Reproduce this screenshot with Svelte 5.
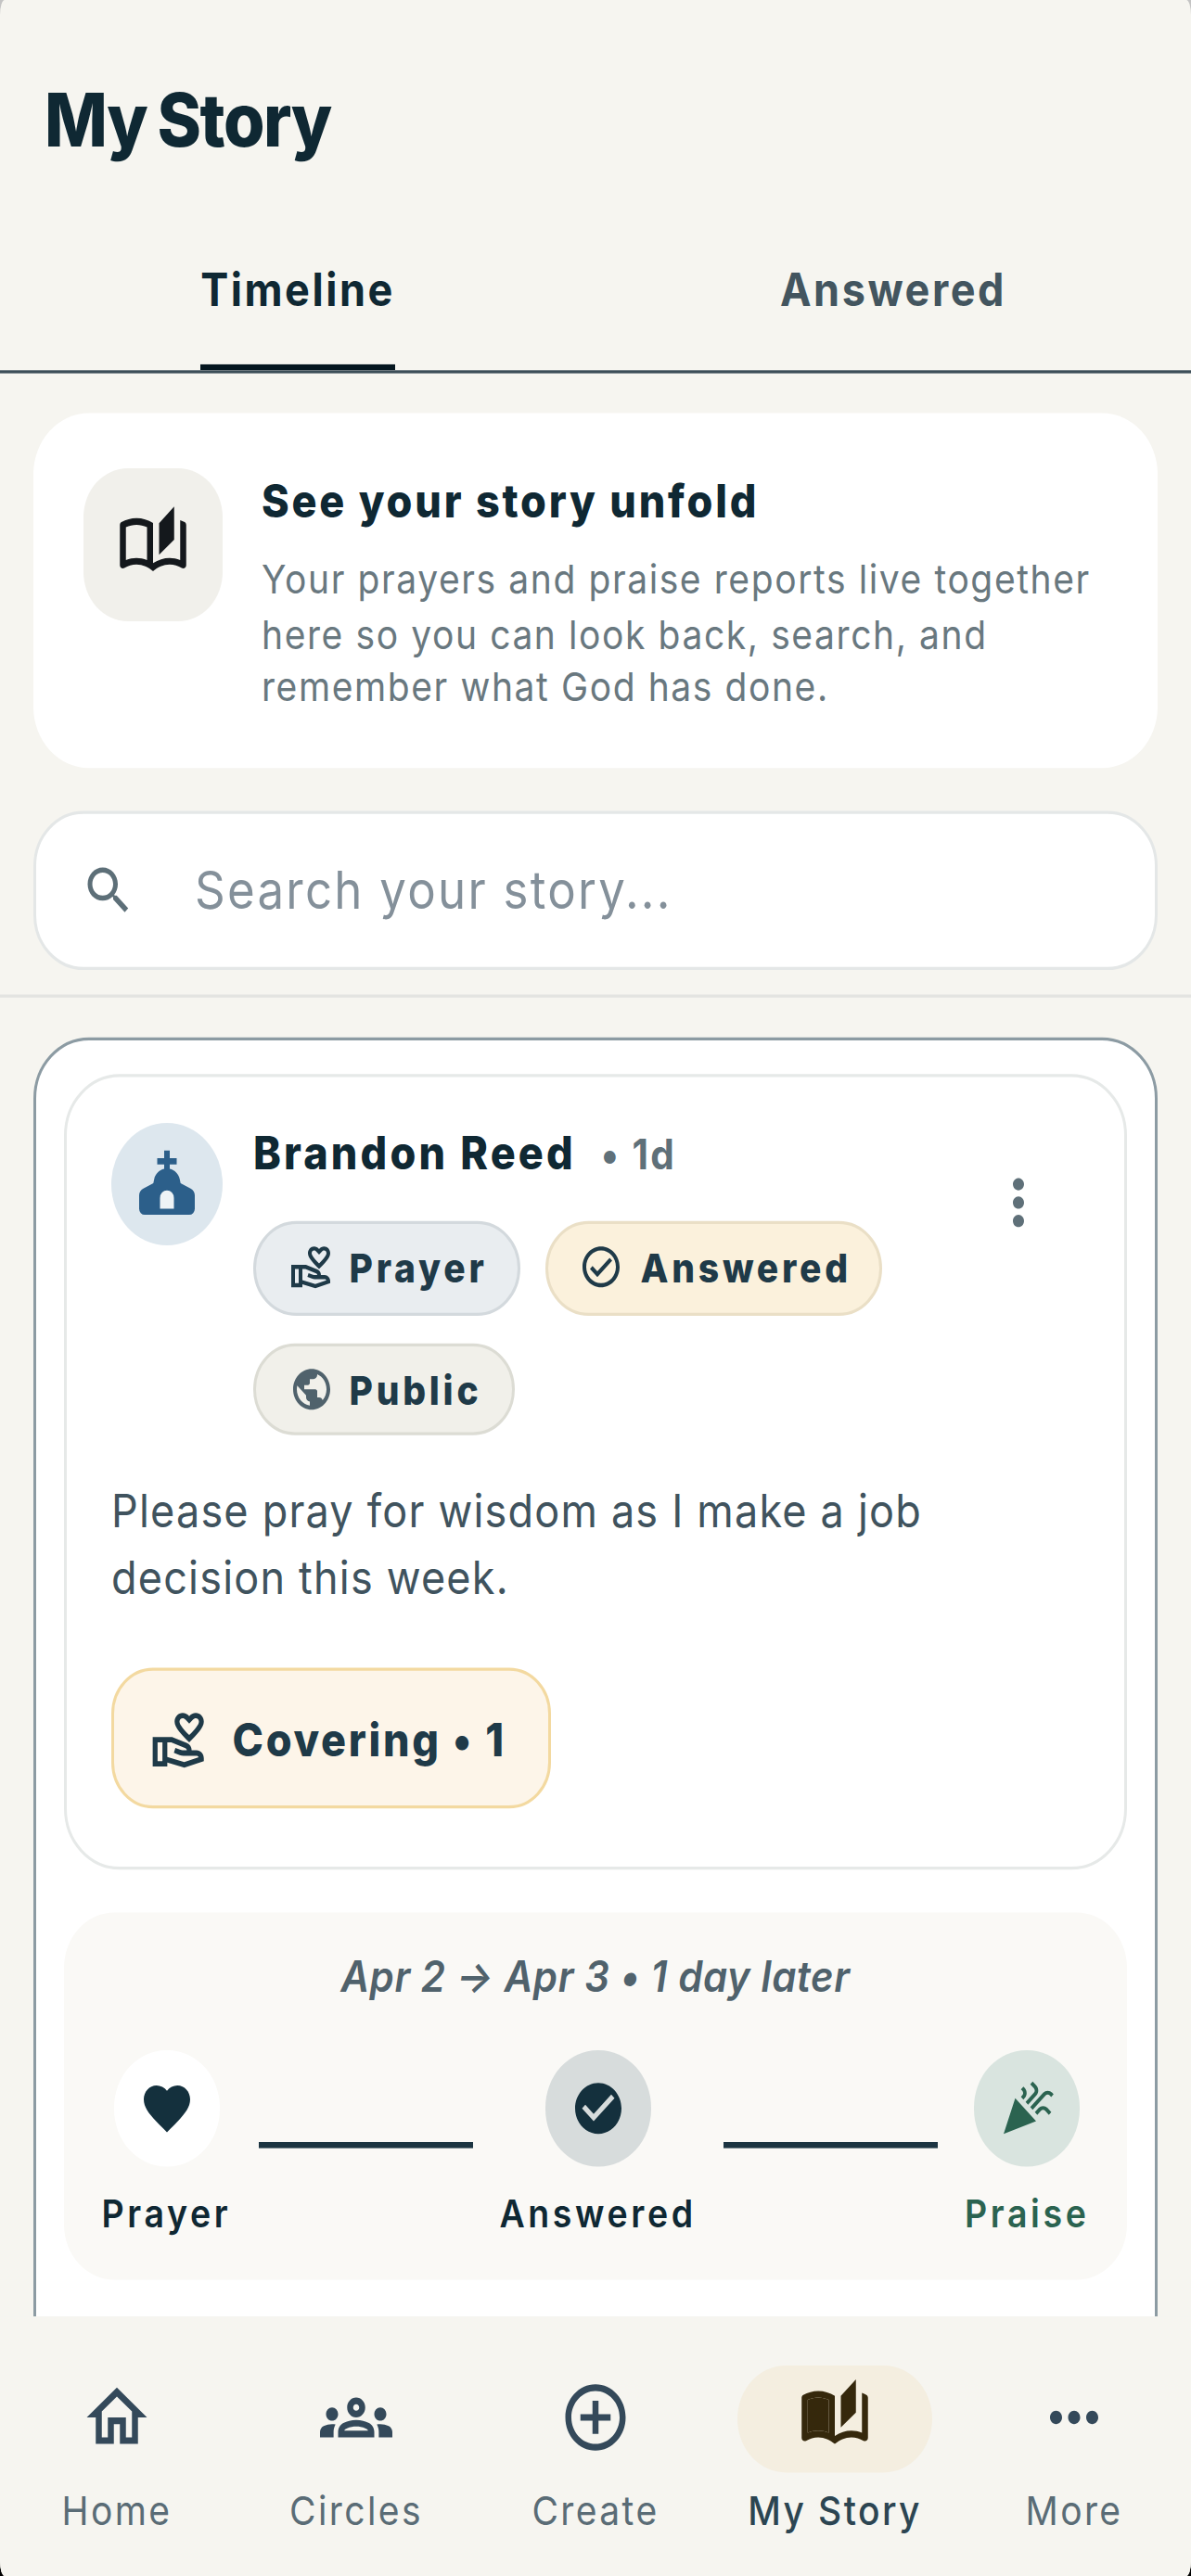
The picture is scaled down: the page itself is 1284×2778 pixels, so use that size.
<script>
  const navItems = [
    { label: 'Home', icon: 'M12 5.69l5 4.5V18h-2v-6H9v6H7v-7.81l5-4.5M12 3L2 12h3v8h6v-6h2v6h6v-8h3L12 3z' },
    { label: 'Circles', icon: 'M4 13c1.1 0 2-.9 2-2s-.9-2-2-2-2 .9-2 2 .9 2 2 2zm1.13 1.1c-.37-.06-.74-.1-1.13-.1-.99 0-1.93.21-2.78.58C.48 14.9 0 15.62 0 16.43V18h4.5v-1.61c0-.83.23-1.61.63-2.29zM20 13c1.1 0 2-.9 2-2s-.9-2-2-2-2 .9-2 2 .9 2 2 2zm4 3.43c0-.81-.48-1.53-1.22-1.85-.85-.37-1.79-.58-2.78-.58-.39 0-.76.04-1.13.1.4.68.63 1.46.63 2.29V18H24v-1.57zm-7.76-2.78c-1.17-.52-2.61-.9-4.24-.9-1.63 0-3.07.39-4.24.9C6.68 14.13 6 15.21 6 16.39V18h12v-1.61c0-1.18-.68-2.26-1.76-2.74zM8.07 16c.09-.23.13-.39.91-.69.97-.38 1.99-.56 3.02-.56s2.05.18 3.02.56c.77.3.81.46.91.69H8.07zM12 8c.55 0 1 .45 1 1s-.45 1-1 1-1-.45-1-1 .45-1 1-1m0-2c-1.66 0-3 1.34-3 3s1.34 3 3 3 3-1.34 3-3-1.34-3-3-3z' },
    { label: 'Create', icon: 'M13 7h-2v4H7v2h4v4h2v-4h4v-2h-4V7zm-1-5C6.48 2 2 6.48 2 12s4.48 10 10 10 10-4.48 10-10S17.52 2 12 2zm0 18c-4.41 0-8-3.59-8-8s3.59-8 8-8 8 3.59 8 8-3.59 8-8 8z' },
    { label: 'My Story', active: true },
    { label: 'More', icon: 'M6 10c-1.1 0-2 .9-2 2s.9 2 2 2 2-.9 2-2-.9-2-2-2zm12 0c-1.1 0-2 .9-2 2s.9 2 2 2 2-.9 2-2-.9-2-2-2zm-6 0c-1.1 0-2 .9-2 2s.9 2 2 2 2-.9 2-2-.9-2-2-2z' }
  ];

  const book = 'M22.47 5.2C22 4.96 21.51 4.76 21 4.59v12.03C19.86 16.21 18.69 16 17.5 16c-1.9 0-3.78.54-5.5 1.58V5.48C10.38 4.55 8.51 4 6.5 4 4.71 4 3.02 4.44 1.53 5.2 1.2 5.36 1 5.71 1 6.08v12.08c0 .58.47.99 1 .99.16 0 .32-.04.48-.12C3.69 18.4 5.05 18 6.5 18c2.07 0 3.98.82 5.5 2 1.52-1.18 3.43-2 5.5-2 1.45 0 2.81.4 4.02 1.04.16.08.32.12.48.12.52 0 1-.41 1-.99V6.08c0-.37-.2-.72-.53-.88zM10 16.62C8.86 16.21 7.69 16 6.5 16c-1.19 0-2.36.21-3.5.62V6.71C4.11 6.24 5.28 6 6.5 6c1.2 0 2.39.25 3.5.72v9.9zM19 .5l-5 5V15l5-4.5V.5z';
  const bookPage = 'M3 6.71C4.11 6.24 5.28 6 6.5 6c1.2 0 2.39.25 3.5.72v9.9C8.86 16.21 7.69 16 6.5 16c-1.19 0-2.36.21-3.5.62z';
  const hands = 'M16 13c3.09-2.81 6-5.44 6-7.7C22 3.45 20.55 2 18.7 2c-1.04 0-2.05.49-2.7 1.25C15.34 2.49 14.34 2 13.3 2 11.45 2 10 3.45 10 5.3c0 2.26 2.91 4.89 6 7.7zm-2.7-9c.44 0 .89.21 1.18.55L16 6l1.52-1.45c.29-.34.74-.55 1.18-.55.74 0 1.3.56 1.3 1.3 0 1.12-2.04 3.17-4 4.99-1.96-1.82-4-3.87-4-4.99 0-.74.56-1.3 1.3-1.3zM19 16h-2c0-1.2-.75-2.28-1.87-2.7L8.97 11H1v11h6v-1.44l7 1.94 8-2.5v-1c0-1.66-1.34-3-3-3zM3 20v-7h2v7H3zm10.97.41L7 18.48V13h1.61l5.82 2.17c.34.13.57.46.57.83 0 0-2-.05-2.3-.15l-2.38-.79-.63 1.9 2.38.79c.51.17 1.04.26 1.58.26H19c.39 0 .74.23.9.56l-5.93 1.84z';
  const circleCheck = 'M12 2C6.48 2 2 6.48 2 12s4.48 10 10 10 10-4.48 10-10S17.52 2 12 2zm0 18c-4.41 0-8-3.59-8-8s3.59-8 8-8 8 3.59 8 8-3.59 8-8 8zm4.59-12.42L10 14.17l-2.59-2.58L6 13l4 4 8-8z';
  const globe = 'M12 2C6.48 2 2 6.48 2 12s4.48 10 10 10 10-4.48 10-10S17.52 2 12 2zm-1 17.93c-3.95-.49-7-3.85-7-7.93 0-.62.08-1.21.21-1.79L9 15v1c0 1.1.9 2 2 2v1.93zm6.9-2.54c-.26-.81-1-1.39-1.9-1.39h-1v-3c0-.55-.45-1-1-1H8v-2h2c.55 0 1-.45 1-1V7h2c1.1 0 2-.9 2-2v-.41c2.93 1.19 5 4.06 5 7.41 0 2.08-.8 3.97-2.1 5.39z';
</script>

<div class="stage">
  <div class="screen">
    <header>
      <h1>My Story</h1>
      <div class="tabs">
        <div class="tab on"><span>Timeline</span></div>
        <div class="tab"><span>Answered</span></div>
      </div>
    </header>

    <section class="intro">
      <div class="intro-icon">
        <svg viewBox="0 0 24 24" width="26" height="26"><path d={book} /></svg>
      </div>
      <div>
        <h2>See your story unfold</h2>
        <p>Your prayers and praise reports live together here so you can look back, search, and remember what God has done.</p>
      </div>
    </section>

    <div class="search">
      <svg viewBox="0 0 24 24" width="20" height="20"><path d="M15.5 14h-.79l-.28-.27C15.41 12.59 16 11.11 16 9.5 16 5.91 13.09 3 9.5 3S3 5.91 3 9.5 5.91 16 9.5 16c1.61 0 3.09-.59 4.23-1.57l.27.28v.79l5 4.99L20.49 19l-4.99-5zm-6 0C7.01 14 5 11.99 5 9.5S7.01 5 9.5 5 14 7.01 14 9.5 11.99 14 9.5 14z" /></svg>
      <span>Search your story...</span>
    </div>

    <main class="feed">
      <article class="story">
        <div class="post">
          <div class="post-head">
            <div class="avatar">
              <svg viewBox="0 0 24 24" width="24" height="24">
                <path d="M11 1h2v2.5h2.5v2H13V7c1.8.4 3.2 1.6 3.6 3.4l.3 1.3 3.6 1.7c.9.4 1.5 1.2 1.5 2.2V20a2 2 0 0 1-2 2H4a2 2 0 0 1-2-2v-4.4c0-1 .6-1.8 1.5-2.2l3.6-1.7.3-1.3C7.8 8.6 9.2 7.4 11 7V5.5H8.5v-2H11z" />
                <path class="door" d="M9.5 20h5v-3.5a2.5 2.5 0 0 0-5 0z" />
              </svg>
            </div>
            <div class="who">
              <div class="name-row"><span class="name">Brandon Reed</span><span class="ago">• 1d</span></div>
              <div class="chips">
                <span class="chip prayer"><svg viewBox="0 0 24 24" width="16" height="16"><path d={hands} /></svg>Prayer</span>
                <span class="chip answered"><svg viewBox="0 0 24 24" width="16" height="16"><path d={circleCheck} /></svg>Answered</span>
                <span class="chip public"><svg viewBox="0 0 24 24" width="16" height="16"><path d={globe} /></svg>Public</span>
              </div>
            </div>
            <svg class="menu" viewBox="0 0 24 24" width="24" height="24"><path d="M12 8c1.1 0 2-.9 2-2s-.9-2-2-2-2 .9-2 2 .9 2 2 2zm0 2c-1.1 0-2 .9-2 2s.9 2 2 2 2-.9 2-2-.9-2-2-2zm0 6c-1.1 0-2 .9-2 2s.9 2 2 2 2-.9 2-2-.9-2-2-2z" /></svg>
          </div>
          <p class="body">Please pray for wisdom as I make a job decision this week.</p>
          <div class="covering">
            <svg viewBox="0 0 24 24" width="21" height="21"><path d={hands} /></svg>
            <span>Covering • 1</span>
          </div>
        </div>

        <div class="journey">
          <div class="dates">Apr 2 → Apr 3 • 1 day later</div>
          <div class="steps">
            <div class="step">
              <div class="dot white"><svg viewBox="0 0 24 24" width="20" height="20"><path d="M12 21.35l-1.45-1.32C5.4 15.36 2 12.28 2 8.5 2 5.42 4.42 3 7.5 3c1.74 0 3.41.81 4.5 2.09C13.09 3.81 14.76 3 16.5 3 19.58 3 22 5.42 22 8.5c0 3.78-3.4 6.86-8.55 11.54L12 21.35z" /></svg></div>
              <span>Prayer</span>
            </div>
            <div class="link"></div>
            <div class="step">
              <div class="dot grey"><svg viewBox="0 0 24 24" width="20" height="20"><path d="M12 2C6.48 2 2 6.48 2 12s4.48 10 10 10 10-4.48 10-10S17.52 2 12 2zm-2 15l-5-5 1.41-1.41L10 14.17l7.59-7.59L19 8l-9 9z" /></svg></div>
              <span>Answered</span>
            </div>
            <div class="link"></div>
            <div class="step praise">
              <div class="dot green"><svg viewBox="0 0 24 24" width="20" height="20"><path d="M2 22l14-5-9-9zM14.53 12.53l5.59-5.59c.49-.49 1.28-.49 1.77 0l.59.59 1.06-1.06-.59-.59c-1.07-1.07-2.82-1.07-3.89 0l-5.59 5.59 1.06 1.06zM10.06 6.88l-.59.59 1.06 1.06.59-.59c1.07-1.07 1.07-2.82 0-3.89l-.59-.59-1.06 1.07.59.59c.48.48.48 1.28 0 1.76zM17.06 11.88l-1.59 1.59 1.06 1.06 1.59-1.59c.49-.49 1.28-.49 1.77 0l1.61 1.61 1.06-1.06-1.61-1.61c-1.08-1.07-2.82-1.07-3.89 0zM15.06 5.88l-3.59 3.59 1.06 1.06 3.59-3.59c1.07-1.07 1.07-2.82 0-3.89l-1.59-1.59-1.06 1.06 1.59 1.59c.48.49.48 1.29 0 1.77z" /></svg></div>
              <span>Praise</span>
            </div>
          </div>
        </div>
      </article>
    </main>

    <nav>
      {#each navItems as item}
        <div class="nav-item" class:active={item.active}>
          <div class="nav-icon">
            <svg viewBox="0 0 24 24" width="26" height="26">
              {#if item.active}
                <path d={book} /><path d={bookPage} />
              {:else}
                <path d={item.icon} />
              {/if}
            </svg>
          </div>
          <span>{item.label}</span>
        </div>
      {/each}
    </nav>
  </div>
</div>

<style>
  :global(body) {
    margin: 0;
    background: linear-gradient(#c4c4c4 50%, #000 50%);
  }

  .stage {
    width: 1284px;
    height: 2778px;
    overflow: hidden;
    border-radius: 5px / 16px;
    background: #f6f5f0;
  }

  /* the capture is 3x wide and 3.3x tall, so the page is drawn at 428 wide and stretched */
  .screen {
    width: 428px;
    height: 842px;
    transform: scale(3, 3.3);
    transform-origin: 0 0;
    display: flex;
    flex-direction: column;
    color: #0f2833;
    font-family: Inter, "Noto Sans", sans-serif;
  }

  svg { display: block; fill: currentColor; flex: none; }

  h1 {
    margin: 0;
    padding: 24.5px 16px 0;
    font-size: 24px;
    line-height: 30px;
    font-weight: 800;
    letter-spacing: -0.5px;
    word-spacing: -1px;
    color: #0f2833;
  }

  .tabs {
    display: flex;
    margin-top: 29.5px;
    height: 37px;
    border-bottom: 1px solid #3c4e58;
  }
  .tab {
    flex: 1;
    display: flex;
    justify-content: center;
    font-size: 15px;
    font-weight: 700;
    letter-spacing: 0.85px;
    color: #43555f;
  }
  .tab span { height: 37px; line-height: 21px; box-sizing: border-box; }
  .tab.on { color: #0f2833; }
  .tab.on span { border-bottom: 2.5px solid #05161f; border-radius: 2px 2px 0 0; }

  .intro {
    margin: 13px 12px 0;
    padding: 17.5px 18px;
    height: 116px;
    box-sizing: border-box;
    display: flex;
    gap: 14px;
    background: #fff;
    border-radius: 20px;
  }
  .intro-icon {
    width: 50px;
    height: 50.5px;
    flex: none;
    display: flex;
    align-items: center;
    justify-content: center;
    background: #f1f0eb;
    border-radius: 16px;
    color: #14181c;
  }
  h2 {
    margin: 1.5px 0 0;
    font-size: 15px;
    line-height: 20px;
    font-weight: 800;
    letter-spacing: 0.93px;
    color: #0f2833;
  }
  .intro p {
    margin: 7px 0 0;
    font-size: 13px;
    line-height: 17.6px;
    letter-spacing: 0.53px;
    color: #69787f;
  }

  .search {
    margin: 13.5px 12px 0;
    height: 52px;
    box-sizing: border-box;
    display: flex;
    align-items: center;
    gap: 21px;
    padding-left: 16px;
    background: #fff;
    border: 1px solid #e4e7e7;
    border-radius: 18px;
    color: #5d6f78;
  }
  .search span {
    font-size: 17px;
    letter-spacing: 0.75px;
    color: #84909a;
  }

  .feed {
    flex: 1;
    min-height: 0;
    overflow: hidden;
    margin-top: 8.5px;
    padding: 13px 12px 0;
    border-top: 1px solid #e3e4e1;
  }
  .story {
    box-sizing: border-box;
    height: 460px;
    padding: 10.5px 10.5px 10.5px 10px;
    background: #fff;
    border: 1px solid #8c9ba3;
    border-radius: 20px;
  }
  .post {
    height: 260px;
    box-sizing: border-box;
    padding: 15px 16px 16px;
    border: 1px solid #e6e9e8;
    border-radius: 20px;
  }
  .post-head { display: flex; gap: 11px; }
  .avatar {
    width: 40px;
    height: 40px;
    flex: none;
    display: flex;
    align-items: center;
    justify-content: center;
    border-radius: 50%;
    background: #dde7ee;
    color: #2c5f8a;
  }
  .door { fill: #eef3f6; }
  .who { flex: 1; min-width: 0; }
  .name-row {
    display: flex;
    align-items: baseline;
    gap: 9px;
    height: 24px;
    line-height: 20px;
  }
  .name { font-size: 15px; font-weight: 800; letter-spacing: 1.05px; color: #0f2833; }
  .ago { font-size: 13.5px; font-weight: 700; letter-spacing: 0.8px; color: #5f7079; }
  .chips { display: flex; flex-wrap: wrap; gap: 9px; margin-top: 8.5px; }
  .chip {
    height: 30.5px;
    box-sizing: border-box;
    display: flex;
    align-items: center;
    gap: 6px;
    padding: 0 10.5px 0 11.5px;
    border: 1px solid;
    border-radius: 16px;
    font-size: 13px;
    font-weight: 800;
    letter-spacing: 1.25px;
    color: #1f3a48;
  }
  .prayer { background: #e9edf0; border-color: #d3d9dd; }
  .answered { background: #fbf1dc; border-color: #eadfc6; }
  .public { background: #f1f0ea; border-color: #dcdcd4; }
  .public svg { color: #50626c; }
  .menu { color: #5f7079; margin: 14.5px 9.5px 0 0; }

  .body {
    margin: 13.5px 0 0;
    font-size: 15px;
    line-height: 22px;
    letter-spacing: 0.4px;
    color: #40535e;
  }
  .covering {
    margin-top: 18.5px;
    width: fit-content;
    height: 46px;
    box-sizing: border-box;
    display: flex;
    align-items: center;
    gap: 8.5px;
    padding: 0 15px 0 13px;
    background: #fdf5e9;
    border: 1px solid #f3d9a0;
    border-radius: 15px;
    font-size: 15px;
    font-weight: 800;
    letter-spacing: 0.9px;
    color: #1f3a48;
  }

  .journey {
    margin-top: 14px;
    height: 120px;
    padding: 0 13px 0 13.5px;
    box-sizing: border-box;
    background: #faf9f6;
    border-radius: 18px;
    overflow: hidden;
  }
  .dates {
    margin-top: 12.5px;
    height: 17px;
    line-height: 17px;
    text-align: center;
    font-size: 14px;
    font-style: italic;
    font-weight: 600;
    letter-spacing: 0.2px;
    color: #50626c;
  }
  .steps { display: flex; align-items: flex-start; gap: 9.5px; margin-top: 16px; }
  .step {
    display: flex;
    flex-direction: column;
    align-items: center;
    gap: 8px;
    font-size: 12.5px;
    line-height: 16px;
    font-weight: 600;
    letter-spacing: 1.2px;
    color: #0f2833;
  }
  .step.praise { color: #2b6350; }
  .dot {
    width: 37.5px;
    height: 37.5px;
    display: flex;
    align-items: center;
    justify-content: center;
    border-radius: 50%;
  }
  .white { background: #fff; color: #14303d; }
  .grey { background: #d7dcdc; color: #14303d; }
  .green { background: #d9e4df; color: #2b6350; }
  .link { flex: 1; height: 2.4px; margin-top: 29.5px; background: #1c3542; }

  nav {
    height: 85px;
    flex: none;
    display: flex;
    justify-content: center;
    background: #f6f5f0;
    padding-top: 15.5px;
    box-sizing: border-box;
  }
  .nav-item {
    flex: 0 0 86px;
    display: flex;
    flex-direction: column;
    align-items: center;
    gap: 4.5px;
    font-size: 13px;
    line-height: 16px;
    letter-spacing: 0.8px;
    color: #5a6c76;
  }
  .nav-icon {
    width: 70px;
    height: 35px;
    display: flex;
    align-items: center;
    justify-content: center;
    border-radius: 18px;
    color: #34495a;
  }
  .active { color: #2c4552; font-weight: 500; }
  .active .nav-icon { background: #f4eee0; color: #35280c; }
</style>
